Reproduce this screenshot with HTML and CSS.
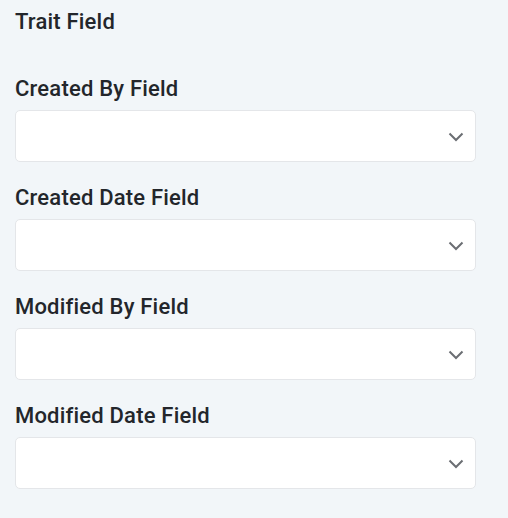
FILE: index.html
```html
<!DOCTYPE html>
<html>
<head>
<meta charset="utf-8">
<link rel="stylesheet" href="styles.css">
</head>
<body>
<div class="panel">
  <div class="field-title">Trait Field</div>
  <div class="group">
    <div class="label">Created By Field</div>
    <div class="select"><svg class="chev" viewBox="0 0 16 10" width="16" height="10"><path d="M1.5 1.5 L8 8 L14.5 1.5" fill="none" stroke="#6b6e73" stroke-width="2"/></svg></div>
  </div>
  <div class="group">
    <div class="label">Created Date Field</div>
    <div class="select"><svg class="chev" viewBox="0 0 16 10" width="16" height="10"><path d="M1.5 1.5 L8 8 L14.5 1.5" fill="none" stroke="#6b6e73" stroke-width="2"/></svg></div>
  </div>
  <div class="group">
    <div class="label">Modified By Field</div>
    <div class="select"><svg class="chev" viewBox="0 0 16 10" width="16" height="10"><path d="M1.5 1.5 L8 8 L14.5 1.5" fill="none" stroke="#6b6e73" stroke-width="2"/></svg></div>
  </div>
  <div class="group">
    <div class="label">Modified Date Field</div>
    <div class="select"><svg class="chev" viewBox="0 0 16 10" width="16" height="10"><path d="M1.5 1.5 L8 8 L14.5 1.5" fill="none" stroke="#6b6e73" stroke-width="2"/></svg></div>
  </div>
</div>
</body>
</html>
```
FILE: styles.css
```css
html, body {
  margin: 0;
  padding: 0;
  background: #f2f6f9;
  width: 508px;
  height: 518px;
  overflow: hidden;
}
.panel {
  padding: 9px 32px 0 15px;
  font-family: Roboto, "Liberation Sans", sans-serif;
  color: #23262b;
}
.field-title, .label {
  font-size: 22px;
  font-weight: 500;
  line-height: 26px;
  letter-spacing: 0.2px;
}
.field-title {
  margin-bottom: 41px;
}
.label {
  margin-bottom: 8px;
}
.group {
  margin-bottom: 23px;
}
.select {
  box-sizing: border-box;
  height: 52px;
  background: #ffffff;
  border: 1px solid #e4e6e9;
  border-radius: 5px;
  display: flex;
  align-items: center;
  justify-content: flex-end;
  padding-right: 11px;
}
.chev {
  display: block;
  margin-top: 2px;
}
```
